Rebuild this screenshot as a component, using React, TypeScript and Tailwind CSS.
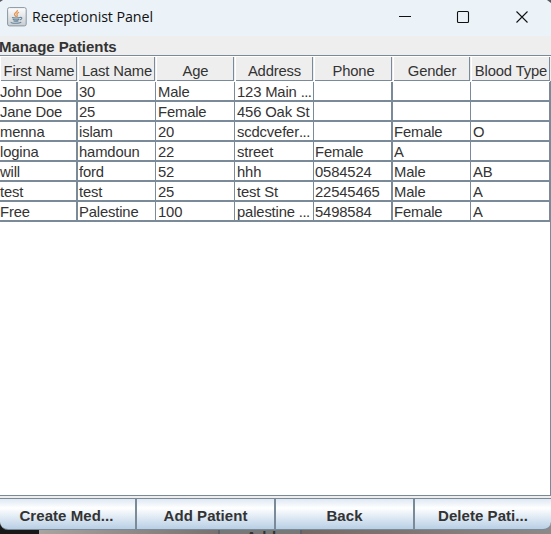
const columns = ["First Name", "Last Name", "Age", "Address", "Phone", "Gender", "Blood Type"];

const rows = [
  ["John Doe", "30", "Male", "123 Main ...", "", "", ""],
  ["Jane Doe", "25", "Female", "456 Oak St", "", "", ""],
  ["menna", "islam", "20", "scdcvefer...", "", "Female", "O"],
  ["logina", "hamdoun", "22", "street", "Female", "A", ""],
  ["will", "ford", "52", "hhh", "0584524", "Male", "AB"],
  ["test", "test", "25", "test St", "22545465", "Male", "A"],
  ["Free", "Palestine", "100", "palestine ...", "5498584", "Female", "A"],
];

const grid = "grid grid-cols-[78px_78px_79px_79px_79px_78px_80px]";
const rightBorder = ["border-r-2", "border-r", "border-r", "border-r", "border-r-2", "border-r", "border-r-2"];
const cellPad = ["pl-0", "pl-px", "pl-0.5", "pl-0.5", "pl-px", "pl-px", "pl-0.5"];
const actions = ["Create Med...", "Add Patient", "Back", "Delete Pati..."];

function JavaIcon() {
  return (
    <svg width="20" height="20" viewBox="0 0 20 20" fill="none">
      <defs>
        <linearGradient id="tile" x1="0" y1="0" x2="0" y2="1">
          <stop stopColor="#fdfdfd" />
          <stop offset="1" stopColor="#c7cdd2" />
        </linearGradient>
      </defs>
      <rect x=".6" y=".6" width="18.6" height="18.3" rx="1.8" fill="url(#tile)" stroke="#8c969e" strokeWidth="1" />
      <path d="M10.3 3c1 2-3.400 3-2.800 4.700.2.900 1.200 1.400 1.700 2.200M12 5.200c-1.500.8-2.500 1.600-1.900 2.700.4.700.4 1.300-.4 2" stroke="#e4934f" strokeWidth="1.300" />
      <path d="M5 10.500c1.800.7 6.300.7 8 0M5.700 12.200c1.800.7 5 .7 6.500 0M6.500 13.700c1.500.6 3.800.6 5 0M13 10.500c2.500-.6 2.500 1.800-.2 2.400M4.200 15c-1 1.600 8.300 1.800 10 .1" stroke="#64849c" strokeWidth="1.100" />
    </svg>
  );
}

export default function App() {
  return (
    <div className="relative flex h-[534px] w-[551px] flex-col overflow-hidden bg-[#858180] font-['Liberation_Sans',Arial,sans-serif] text-[14.8px] tracking-[-0.15px] text-[#333]">
      <div className="flex h-9 shrink-0 items-center bg-[#ebf3f9]">
        <div className="ml-[7px] mt-[-3px] h-5 w-5"><JavaIcon /></div>
        <span className="ml-[5px] mt-[-2px] flex-1 whitespace-nowrap font-['Open_Sans',sans-serif] text-[14.3px] tracking-[-0.1px] text-[#111]">Receptionist Panel</span>
        <svg className="mt-[-2px]" width="160" height="34" viewBox="391 0 160 34" fill="none" stroke="#111" strokeWidth="1.100">
          <path d="M399 16.500h12M516.500 11.500l11 11m0-11l-11 11" />
          <rect x="457.500" y="11.500" width="11" height="11" rx="1" />
        </svg>
      </div>
      <div className="h-[19px] shrink-0 bg-[#eee] text-[15px] font-bold leading-[22px] whitespace-nowrap"><span className="ml-[-1px] tracking-[-0.05px]">Manage Patients</span></div>
      <div className="flex h-[441px] shrink-0 flex-col border-y border-r border-[#7a8a99] bg-white">
        <div className={`${grid} h-[25px] w-[551px] shrink-0 bg-[#eee]`}>
          {columns.map((name) => (
            <div key={name} className="border-l border-t border-white">
              <div className="mr-px flex h-6 items-center justify-center whitespace-nowrap border-b border-r border-[#7a8a99] pt-[5px] pl-px leading-[18px]">{name}</div>
            </div>
          ))}
        </div>
        <div className="h-px shrink-0" />
        {rows.map((row) => (
          <div key={row[0]} className={`${grid} h-5 w-[551px] shrink-0`}>
            {row.map((value, i) => (
              <div key={i} className={`${rightBorder[i]} ${cellPad[i]} overflow-hidden whitespace-nowrap border-b-2 border-[#7a8a99] leading-[21px]`}>
                {value.endsWith("...") ? (
                  <>{value.slice(0, -3)}<span className="tracking-[-0.5px]">...</span></>
                ) : value}
              </div>
            ))}
          </div>
        ))}
      </div>
      <div className="h-0.5 shrink-0 bg-[#eee]" />
      <div className="relative z-10 grid h-8 shrink-0 grid-cols-[137px_139px_139px_136px] overflow-hidden rounded-b-lg border-y border-[#7a8a99] bg-linear-to-b from-[#dfe8f2] via-white via-30% to-[#b8cfe5]">
        {actions.map((name, i) => (
          <button key={name} className={`${i < 3 ? "border-r-2" : ""} ${i === 0 ? "pr-0.5" : ""} whitespace-nowrap border-[#7a8a99] pt-[3px] text-[15px] font-bold leading-5 tracking-[0.05px]`}>{name}</button>
        ))}
      </div>
      <div className="mt-[-6px] flex h-[10px] shrink-0">
        <div className="w-[39px] bg-[#181819]" />
        <div className="flex-1 bg-linear-to-r from-[#aaa4a1] to-[#777270]" />
        <div className="w-[84px] border-x-2 border-[#5e6268] bg-[#777878] pl-[26px] pt-[4px] text-[15px] font-bold leading-[18px] tracking-[0.5px]">Add</div>
        <div className="w-[249px] bg-linear-to-r from-[#756965] to-[#8c8988]" />
      </div>
      <svg className="absolute left-0 top-0" width="551" height="5"><path d="M0 0h3L0 2M547 0h4v3z" fill="#555b60" /></svg>
    </div>
  );
}
